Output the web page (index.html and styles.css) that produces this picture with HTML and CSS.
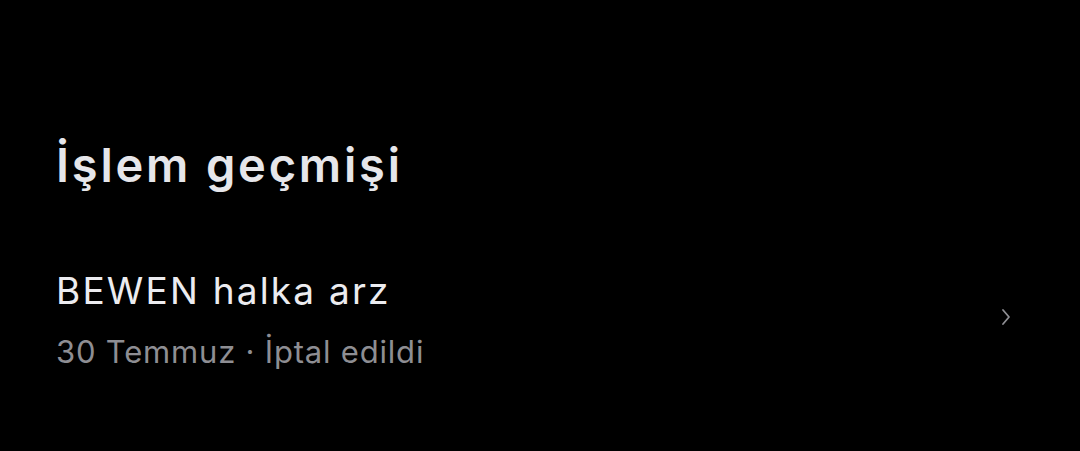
FILE: index.html
```html
<!DOCTYPE html>
<html lang="tr">
<head>
<meta charset="utf-8">
<link rel="stylesheet" href="styles.css">
</head>
<body>
<main class="page">
  <h1 class="title">İşlem geçmişi</h1>
  <div class="row">
    <div class="row-text">
      <div class="row-title">BEWEN halka arz</div>
      <div class="row-sub">30 Temmuz · İptal edildi</div>
    </div>
    <svg class="chev" width="10" height="18" viewBox="0 0 10 18"><path d="M2 2 L8 9 L2 16" fill="none" stroke="#8e8e93" stroke-width="1.8" stroke-linecap="round" stroke-linejoin="round"/></svg>
  </div>
</main>
</body>
</html>
```
FILE: styles.css
```css
html, body {
  margin: 0;
  padding: 0;
  background: #000;
  height: 100%;
}
body {
  font-family: Inter, "Noto Sans", sans-serif;
  color: #ececf0;
}
.page {
  padding: 135px 69px 0 56px;
}
.title {
  margin: 0;
  font-size: 47px;
  font-weight: 600;
  line-height: 60px;
  letter-spacing: 2.8px;
  color: #e6e6ea;
}
.row {
  display: flex;
  align-items: center;
  justify-content: space-between;
  margin-top: 71px;
}
.row-title {
  font-size: 37px;
  line-height: 50px;
  letter-spacing: 2.2px;
  color: #ececf0;
}
.row-sub {
  font-size: 31px;
  line-height: 44px;
  letter-spacing: 0.8px;
  color: #8e8e93;
  margin-top: 14px;
}
.chev {
  display: block;
  margin-bottom: 6px;
}
```
